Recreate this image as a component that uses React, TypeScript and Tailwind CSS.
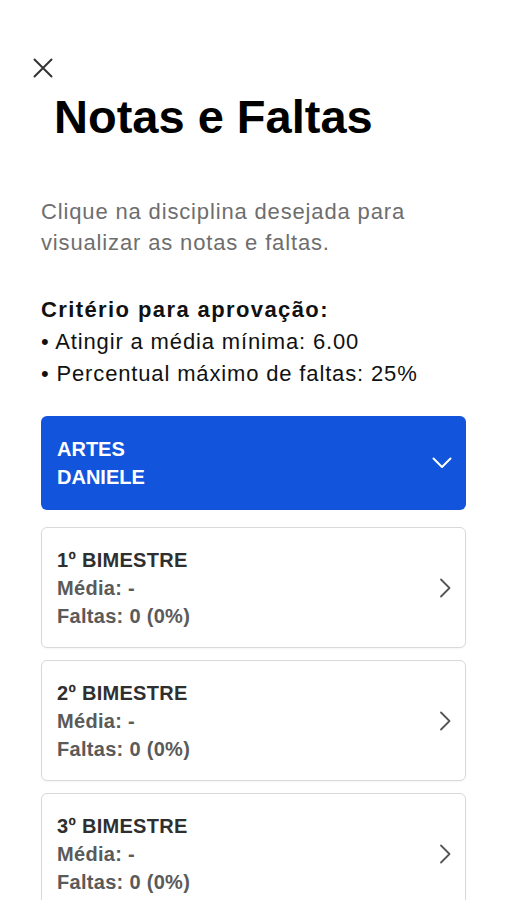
import React from "react";

const font = { fontFamily: '"Liberation Sans", Arial, sans-serif' };

function Card({ title }: { title: string }) {
  return (
    <div className="flex items-center justify-between rounded-[6px] border border-[#d9d9d9] bg-white pl-[15px] pr-[13px] pt-[18px] pb-[17px] shadow-[0_1px_2px_rgba(0,0,0,0.04)]">
      <div className="text-[20px] leading-[28px] font-bold tracking-[0.3px]">
        <div className="text-[#2f2f2f]">{title}</div>
        <div className="text-[#5a5a5a]">Média: -</div>
        <div className="text-[#5a5a5a]">Faltas: 0 (0%)</div>
      </div>
      <svg width="13" height="20" viewBox="0 0 13 20" fill="none" className="shrink-0">
        <path d="M2 1.5 L10.5 10 L2 18.5" stroke="#555" strokeWidth="1.8" strokeLinecap="round" strokeLinejoin="round" />
      </svg>
    </div>
  );
}

export default function App() {
  return (
    <div className="min-h-[900px] w-[507px] bg-white overflow-hidden" style={font}>
      <div className="pt-[58px] pl-[33px]">
        <svg width="20" height="20" viewBox="0 0 20 20" fill="none">
          <path d="M1.5 1.5 L18.5 18.5 M18.5 1.5 L1.5 18.5" stroke="#333" strokeWidth="2" strokeLinecap="round" />
        </svg>
      </div>
      <h1 className="mt-[12px] pl-[54px] text-[47px] leading-[54px] font-bold text-black">Notas e Faltas</h1>
      <div className="px-[41px]">
        <p className="mt-[52px] text-[22px] leading-[31px] tracking-[0.85px] text-[#6e6e6e]">
          Clique na disciplina desejada para visualizar as notas e faltas.
        </p>
        <div className="mt-[36px] text-[22px] leading-[32px] text-[#111] tracking-[0.85px]">
          <div className="font-bold tracking-[1.4px]">Critério para aprovação:</div>
          <div>• Atingir a média mínima: 6.00</div>
          <div>• Percentual máximo de faltas: 25%</div>
        </div>
        <div className="mt-[26px] flex items-center justify-between rounded-[6px] bg-[#1254dc] pl-[16px] pr-[14px] py-[19px]">
          <div className="text-[20px] leading-[28px] font-bold text-white">
            <div>ARTES</div>
            <div>DANIELE</div>
          </div>
          <svg width="20" height="12" viewBox="0 0 20 12" fill="none">
            <path d="M1.5 1.5 L10 10 L18.5 1.5" stroke="#fff" strokeWidth="2" strokeLinecap="round" strokeLinejoin="round" />
          </svg>
        </div>
        <div className="mt-[17px] flex flex-col gap-[12px]">
          <Card title="1º BIMESTRE" />
          <Card title="2º BIMESTRE" />
          <Card title="3º BIMESTRE" />
        </div>
      </div>
    </div>
  );
}
